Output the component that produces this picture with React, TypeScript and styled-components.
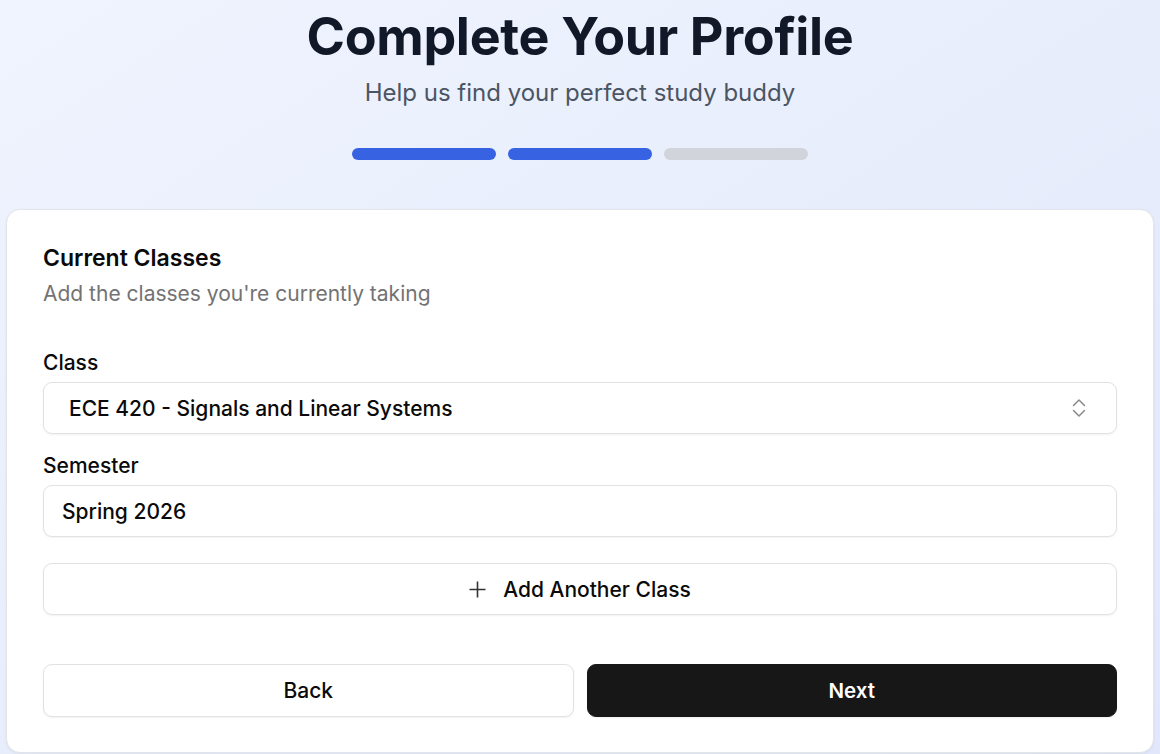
import React from 'react';
import styled, { createGlobalStyle } from 'styled-components';

const GlobalStyle = createGlobalStyle`
  html, body {
    margin: 0;
    padding: 0;
  }
  body {
    font-family: Inter, "Noto Sans", sans-serif;
    background: linear-gradient(to bottom right, #eff4fe, #e2e7fb);
    min-height: 100vh;
  }
  * {
    box-sizing: border-box;
  }
`;

const Page = styled.div`
  display: flex;
  flex-direction: column;
  align-items: center;
  padding: 4px 6px 0;
`;

const Title = styled.h1`
  margin: 0;
  font-size: 52px;
  line-height: 66px;
  font-weight: 700;
  letter-spacing: -0.3px;
  color: #111827;
`;

const Subtitle = styled.p`
  margin: 8px 0 0;
  font-size: 24px;
  line-height: 30px;
  color: #4b5563;
`;

const Steps = styled.div`
  display: flex;
  gap: 12px;
  margin-top: 40px;
`;

const Step = styled.div<{ $done: boolean }>`
  width: 144px;
  height: 12px;
  border-radius: 6px;
  background: ${(p) => (p.$done ? '#3763e2' : '#d1d5db')};
`;

const Card = styled.div`
  width: 100%;
  margin-top: 49px;
  background: #fff;
  border: 1px solid #e3e5ea;
  border-radius: 14px;
  box-shadow: 0 1px 3px rgba(0, 0, 0, 0.06);
  padding: 34px 36px 35px;
`;

const CardTitle = styled.h2`
  margin: 0;
  font-size: 23px;
  line-height: 28px;
  font-weight: 600;
  color: #0a0a0a;
`;

const CardDesc = styled.p`
  margin: 8px 0 0;
  font-size: 21px;
  line-height: 28px;
  color: #737373;
`;

const Fields = styled.div`
  display: flex;
  flex-direction: column;
  margin-top: 43px;
`;

const Label = styled.label`
  display: block;
  font-size: 21px;
  line-height: 24px;
  font-weight: 500;
  color: #0a0a0a;
  margin-bottom: 7px;
`;

const Field = styled.div`
  & + & {
    margin-top: 20px;
  }
`;

const Box = styled.div<{ $indent: number }>`
  height: 52px;
  display: flex;
  align-items: center;
  justify-content: space-between;
  padding: 0 30px 0 ${(p) => p.$indent}px;
  border: 1px solid #e2e2e2;
  border-radius: 9px;
  background: #fff;
  box-shadow: 0 1px 2px rgba(0, 0, 0, 0.05);
  font-size: 21px;
  font-weight: 500;
  color: #0a0a0a;
`;

const AddButton = styled.button`
  margin-top: 26px;
  height: 52px;
  width: 100%;
  display: flex;
  align-items: center;
  justify-content: center;
  gap: 17px;
  border: 1px solid #e2e2e2;
  border-radius: 9px;
  background: #fff;
  box-shadow: 0 1px 2px rgba(0, 0, 0, 0.05);
  font-family: inherit;
  font-size: 21px;
  font-weight: 500;
  color: #0a0a0a;
`;

const Actions = styled.div`
  display: flex;
  gap: 13px;
  margin-top: 49px;
`;

const ActionButton = styled.button<{ $primary?: boolean }>`
  flex: 1;
  height: 53px;
  border-radius: 9px;
  font-family: inherit;
  font-size: ${(p) => (p.$primary ? '20.5px' : '21px')};
  font-weight: ${(p) => (p.$primary ? 600 : 500)};
  border: 1px solid ${(p) => (p.$primary ? '#171717' : '#e2e2e2')};
  background: ${(p) => (p.$primary ? '#171717' : '#fff')};
  color: ${(p) => (p.$primary ? '#fff' : '#0a0a0a')};
  box-shadow: 0 1px 2px rgba(0, 0, 0, 0.06);
`;

const PlusIcon = () => (
  <svg width="17" height="17" viewBox="0 0 17 17" fill="none" stroke="#333" strokeWidth="1.6">
    <path d="M8.5 0.5v16M0.5 8.5h16" />
  </svg>
);

const UpDownIcon = () => (
  <svg width="14" height="20" viewBox="0 0 14 20" fill="none" stroke="#8a8a8a" strokeWidth="1.5" strokeLinecap="round" strokeLinejoin="round">
    <path d="M1.5 7.5 7 2l5.5 5.5" />
    <path d="M1.5 12.5 7 18l5.5-5.5" />
  </svg>
);

const App: React.FC = () => {
  return (
    <>
      <GlobalStyle />
      <Page>
        <Title>Complete Your Profile</Title>
        <Subtitle>Help us find your perfect study buddy</Subtitle>
        <Steps>
          <Step $done />
          <Step $done />
          <Step $done={false} />
        </Steps>
        <Card>
          <CardTitle>Current Classes</CardTitle>
          <CardDesc>Add the classes you're currently taking</CardDesc>
          <Fields>
            <Field>
              <Label>Class</Label>
              <Box $indent={25}>
                <span>ECE 420 - Signals and Linear Systems</span>
                <UpDownIcon />
              </Box>
            </Field>
            <Field>
              <Label>Semester</Label>
              <Box $indent={18}>
                <span>Spring 2026</span>
              </Box>
            </Field>
          </Fields>
          <AddButton>
            <PlusIcon />
            Add Another Class
          </AddButton>
          <Actions>
            <ActionButton>Back</ActionButton>
            <ActionButton $primary>Next</ActionButton>
          </Actions>
        </Card>
      </Page>
    </>
  );
};

export default App;
